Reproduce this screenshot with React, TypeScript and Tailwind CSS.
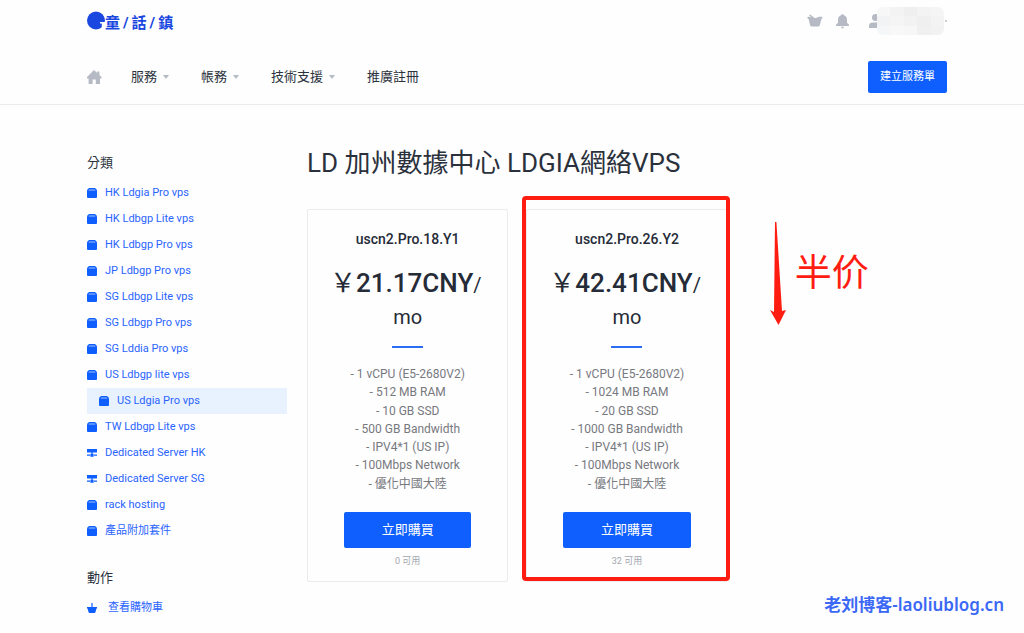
import { clsx } from "clsx";

type IconName = "box" | "server";

const navItems = [
  { label: "服務", caret: true },
  { label: "帳務", caret: true },
  { label: "技術支援", caret: true },
  { label: "推廣註冊", caret: false },
];

const categories: { label: string; icon: IconName; active?: boolean }[] = [
  { label: "HK Ldgia Pro vps", icon: "box" },
  { label: "HK Ldbgp Lite vps", icon: "box" },
  { label: "HK Ldbgp Pro vps", icon: "box" },
  { label: "JP Ldbgp Pro vps", icon: "box" },
  { label: "SG Ldbgp Lite vps", icon: "box" },
  { label: "SG Ldbgp Pro vps", icon: "box" },
  { label: "SG Lddia Pro vps", icon: "box" },
  { label: "US Ldbgp lite vps", icon: "box" },
  { label: "US Ldgia Pro vps", icon: "box", active: true },
  { label: "TW Ldbgp Lite vps", icon: "box" },
  { label: "Dedicated Server HK", icon: "server" },
  { label: "Dedicated Server SG", icon: "server" },
  { label: "rack hosting", icon: "box" },
  { label: "產品附加套件", icon: "box" },
];

const plans = [
  {
    name: "uscn2.Pro.18.Y1",
    price: "21.17CNY",
    features: ["1 vCPU (E5-2680V2)", "512 MB RAM", "10 GB SSD", "500 GB Bandwidth", "IPV4*1 (US IP)", "100Mbps Network", "優化中國大陸"],
    stock: 0,
    marked: false,
  },
  {
    name: "uscn2.Pro.26.Y2",
    price: "42.41CNY",
    features: ["1 vCPU (E5-2680V2)", "1024 MB RAM", "20 GB SSD", "1000 GB Bandwidth", "IPV4*1 (US IP)", "100Mbps Network", "優化中國大陸"],
    stock: 32,
    marked: true,
  },
];

const mosaic = [
  "bg-[#f7f7f8]", "bg-[#f3f3f3]", "bg-[#efeff0]", "bg-[#f3f3f3]", "bg-[#f5f5f5]",
  "bg-[#f2f3f5]", "bg-[#f5f5f5]", "bg-[#f2f2f2]", "bg-[#efefef]", "bg-[#f3f3f3]",
  "bg-[#f5f6f7]", "bg-[#f8f8f8]", "bg-[#f7f7f7]", "bg-[#f0f0f0]", "bg-[#f2f2f2]",
];

const BoxIcon = () => (
  <svg width="10" height="10" viewBox="0 0 10 10" fill="#0f5fff" aria-hidden="true">
    <path d="M2 0h6l1.6 1.6L10 3v6a1 1 0 0 1-1 1H1a1 1 0 0 1-1-1V3l.4-1.4z" />
    <path d="M2.2 1.4h5.6l.8 1H1.4z" fill="#fff" opacity=".6" />
  </svg>
);

const ServerIcon = () => (
  <svg width="10" height="8" viewBox="0 0 10 8" fill="#0f5fff" aria-hidden="true">
    <path d="M0 0h10v3.5H0zM4.4 3.5h1.2v1.3H4.4zM0 5.4h3v1.4H0zM7 5.4h3v1.4H7zM3.4 4.8h3.2v3H3.4z" />
  </svg>
);

const Logo = () => (
  <a href="#" aria-label="童話鎮" className="flex items-center text-[#1a47e0]">
    <svg width="18" height="20" viewBox="0 0 18 20" aria-hidden="true">
      <circle cx="9" cy="9.5" r="9" fill="#1a47e0" />
      <path d="M13 11h5v9h-3.2v-7.4H13z" fill="#fff" />
    </svg>
    <span className="flex gap-[3px] whitespace-nowrap pt-1 text-[15px] font-bold leading-5">
      <span>童</span>
      <span>/</span>
      <span>話</span>
      <span>/</span>
      <span>鎮</span>
    </span>
  </a>
);

const AppHeader = () => (
  <header className="border-b border-[#ebebed] pl-[87px] pr-[77px]">
    <div className="flex h-[42px] items-center justify-between">
      <Logo />
      <div className="flex items-center text-[#b5bac5]">
        <button aria-label="購物車" className="mr-[13px]">
          <svg width="16" height="14" viewBox="0 0 16 14" fill="currentColor" aria-hidden="true">
            <path d="M3.2.4 7.5 4l1.3.1L12.2 2.8h2.7q.9.3.6 1.2l-1.1.9-1.5 6.2Q12.6 12.6 11 12.6H5q-1.5 0-2-1.5L1.6 4.9.5 4.3Q0 3.2 1 2.8h3.3L2 1.3z" />
          </svg>
        </button>
        <button aria-label="通知" className="mr-5">
          <svg width="13" height="15" viewBox="0 0 13 15" fill="currentColor" aria-hidden="true">
            <path d="M6.5 0q.9 0 1 1Q11 2 11 5.6v3.2l2 2V12H0v-1.2l2-2V5.6Q2 2 5.5 1q.1-1 1-1zM5 12.8h3q-.2 1.6-1.5 1.6T5 12.8z" />
          </svg>
        </button>
        <svg width="14" height="14" viewBox="0 0 14 14" fill="currentColor" className="-mr-[6px]" aria-hidden="true">
          <circle cx="6.5" cy="3.5" r="3.5" />
          <path d="M0 14v-2q0-3.4 4-3.4h6q4 0 4 3.4v2z" />
        </svg>
        <div className="relative grid h-7 w-[67px] grid-cols-5 overflow-hidden rounded-md">
          {mosaic.map((tone, i) => (
            <span key={i} className={tone} />
          ))}
        </div>
        <span className="ml-px size-0.5 bg-[#c9cdd5]" />
      </div>
    </div>
    <div className="flex items-center justify-between pt-[19px] pb-[11px]">
      <nav className="flex items-center text-[13px] text-[#2b333d]">
        <a href="#" aria-label="首頁" className="mr-[29px]">
          <svg width="15" height="14" viewBox="0 0 15 14" fill="#b5bac5" aria-hidden="true">
            <path d="M7 0 10.2 3V1.4h2.2v3.5L14.5 7v1.4H13V14H8.8V9.4H5.6V14H1.6V8.4H0V7z" />
          </svg>
        </a>
        {navItems.map((item) => (
          <a key={item.label} href="#" className="mr-8 flex items-center gap-[6px] whitespace-nowrap">
            {item.label}
            {item.caret && (
              <svg width="6" height="4" viewBox="0 0 6 4" fill="#b5bac5" aria-hidden="true">
                <path d="M0 0h6L3 4z" />
              </svg>
            )}
          </a>
        ))}
      </nav>
      <button className="h-8 whitespace-nowrap rounded-xs bg-[#0f5fff] px-3 text-[11px] text-white">建立服務單</button>
    </div>
  </header>
);

const Sidebar = () => (
  <aside className="w-[200px] shrink-0 text-[11px] text-[#2a64ff]">
    <h2 className="mb-[7px] text-[13px] leading-5 text-[#2b333d]">分類</h2>
    <ul>
      {categories.map(({ label, icon, active }) => (
        <li key={label}>
          <a href="#" className={clsx("flex h-[26px] items-center", active && "bg-[#e8f2fe] pl-3")}>
            <span className="mr-2 w-[10px]">{icon === "box" ? <BoxIcon /> : <ServerIcon />}</span>
            {label}
          </a>
        </li>
      ))}
    </ul>
    <h2 className="mt-6 mb-[7px] text-[13px] leading-5 text-[#2b333d]">動作</h2>
    <a href="#" className="flex h-[26px] items-center gap-[11px]">
      <svg width="10" height="10" viewBox="0 0 10 10" fill="#0f5fff" aria-hidden="true">
        <path d="M4.4 0h1.2v4H10v1.4h-.6L8.6 8.8Q8.3 10 7.2 10H2.8Q1.7 10 1.4 8.8L.6 5.4H0V4h4.4z" />
      </svg>
      查看購物車
    </a>
  </aside>
);

const PlanCard = ({ plan }: { plan: (typeof plans)[number] }) => (
  <article className="relative flex flex-col rounded-xs border border-[#ebebed] px-[26px] pt-5 text-center text-[#252b37]">
    <h3 className="text-sm font-medium leading-[18px]">{plan.name}</h3>
    <p className="mt-[19px] text-xl leading-8">
      <span className="-ml-1 whitespace-nowrap">
        <span className="text-[26px]">￥</span>
        <span className="text-[26px] font-medium">{plan.price}</span>/
      </span>
      <br />
      mo
    </p>
    <hr className="mx-auto mt-[13px] w-[31px] border-t-2 border-[#2b6df5]" />
    <ul className="mt-[17px] grid h-[128px] text-xs leading-[18px] text-[#77797e]">
      {plan.features.map((feature) => (
        <li key={feature}>- {feature}</li>
      ))}
    </ul>
    <button className="mx-[10px] mt-[19px] h-9 rounded-xs bg-[#0f5fff] text-[13px] text-white">立即購買</button>
    <p className="mt-[5px] mb-3 text-[9px] leading-4 text-[#a3a7ae]">{plan.stock} 可用</p>
    {plan.marked && (
      <span className="pointer-events-none absolute -top-[14px] -right-[3px] bottom-0 -left-[5px] rounded-sm border-4 border-[#ff1d12]" />
    )}
    {plan.marked && (
      <div className="pointer-events-none absolute top-3 left-full ml-[43px] flex gap-[9px] text-[#ff1d12]">
        <svg width="16" height="103" viewBox="0 0 16 103" fill="currentColor" aria-hidden="true">
          <path d="M5 0h1.4L12 89l4-1-7.5 15L0 88l4 2z" />
        </svg>
        <span className="mt-6 whitespace-nowrap font-['Noto_Sans_CJK_SC',sans-serif] text-[37px] leading-[48px]">半价</span>
      </div>
    )}
  </article>
);

const App = () => (
  <div className="relative min-h-screen bg-[#fefefe] font-[Roboto,'Noto_Sans_CJK_TC',sans-serif]">
    <AppHeader />
    <main className="flex gap-5 pt-12 pr-[77px] pb-3 pl-[87px]">
      <Sidebar />
      <section className="min-w-0 flex-1">
        <h1 className="-mt-2 mb-7 text-[26px] leading-9 text-[#2b313c]">LD 加州數據中心 LDGIA網絡VPS</h1>
        <div className="grid grid-cols-3 gap-[18px]">
          {plans.map((plan) => (
            <PlanCard key={plan.name} plan={plan} />
          ))}
        </div>
      </section>
    </main>
    <span className="absolute right-5 bottom-4 whitespace-nowrap font-['Noto_Sans','Noto_Sans_CJK_SC',sans-serif] text-[17px] font-semibold leading-6 text-[#3b68f5]">
      老刘博客-laoliublog.cn
    </span>
  </div>
);

export default App;
